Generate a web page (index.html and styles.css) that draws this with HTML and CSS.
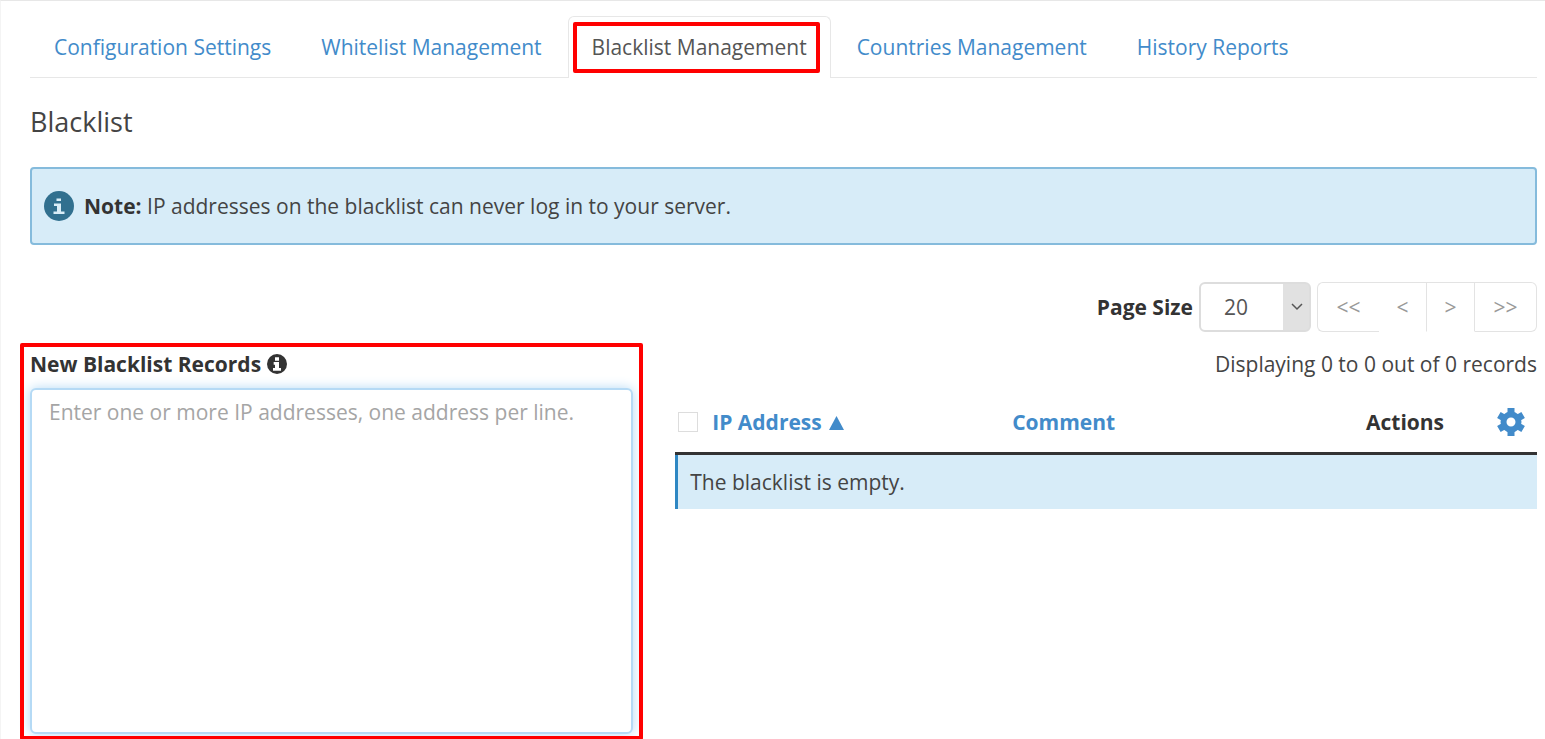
FILE: index.html
```html
<!DOCTYPE html>
<html lang="en">
<head>
    <meta charset="UTF-8">
    <meta name="viewport" content="width=device-width, initial-scale=1.0">
    <title>Blacklist Management</title>
    <link rel="stylesheet" href="styles.css">
</head>
<body>
<div class="page">

    <!-- Tabs -->
    <nav class="tabs">
        <a class="tab" href="#config">Configuration Settings</a>
        <a class="tab" href="#whitelist">Whitelist Management</a>
        <a class="tab active" href="#blacklist">Blacklist Management</a>
        <a class="tab" href="#countries">Countries Management</a>
        <a class="tab" href="#history">History Reports</a>
    </nav>

    <h2>Blacklist</h2>

    <div class="note">
        <svg class="note-icon" viewBox="0 0 30 30" aria-hidden="true">
            <circle cx="15" cy="15" r="15" fill="#31708f"/>
            <path d="M12.500 7.500h4.500v2.500h-4.500zM10 12.500h7v8h3.500v2.500H9.500v-2.500H13v-5.500h-3z" fill="#d9edf7"/>
        </svg>
        <p><strong>Note:</strong> IP addresses on the blacklist can never log in to your server.</p>
    </div>

    <!-- Page size and pager -->
    <div class="toolbar">
        <label for="pageSize">Page Size</label>
        <div class="select-box">
            <select id="pageSize">
                <option>10</option>
                <option selected>20</option>
                <option>50</option>
                <option>100</option>
            </select>
            <svg class="chevron" viewBox="0 0 12 8" aria-hidden="true">
                <path d="M1 1l5 5 5-5" fill="none" stroke="#555" stroke-width="1.5"/>
            </svg>
        </div>
        <div class="pager">
            <button type="button" disabled>&lt;&lt;</button>
            <button type="button" disabled>&lt;</button>
            <button type="button" disabled>&gt;</button>
            <button type="button" disabled>&gt;&gt;</button>
        </div>
    </div>

    <div class="columns">
        <!-- New records -->
        <form class="new-records">
            <label for="records">New Blacklist Records
                <svg class="info-icon" viewBox="0 0 30 30" aria-hidden="true">
                    <circle cx="15" cy="15" r="15" fill="#333"/>
                    <path d="M12 5h6v5h-6zM10 12h8v9h3v4H9v-4h3v-5h-2z" fill="#fff"/>
                </svg>
            </label>
            <textarea id="records" placeholder="Enter one or more IP addresses, one address per line."></textarea>
        </form>

        <!-- Current records -->
        <div class="records">
            <p class="count">Displaying 0 to 0 out of 0 records</p>
            <table>
                <thead>
                    <tr>
                        <th class="col-check"><input type="checkbox" aria-label="Select all"></th>
                        <th class="col-ip">
                            <a href="#ip">IP Address
                                <svg class="sort" viewBox="0 0 15 15" aria-hidden="true">
                                    <path d="M7.500 1L15 15H0z" fill="#428bca"/>
                                </svg>
                            </a>
                        </th>
                        <th class="col-comment"><a href="#comment">Comment</a></th>
                        <th class="col-actions">Actions</th>
                        <th class="col-gear">
                            <button type="button" class="gear" aria-label="Table settings">
                                <svg viewBox="0 0 28 28" aria-hidden="true">
                                    <g stroke="#428bca" stroke-width="7">
                                        <path d="M14 0v7M14 21v7"/>
                                        <path d="M14 0v7M14 21v7" transform="rotate(60 14 14)"/>
                                        <path d="M14 0v7M14 21v7" transform="rotate(120 14 14)"/>
                                    </g>
                                    <circle cx="14" cy="14" r="7.500" fill="none" stroke="#428bca" stroke-width="6"/>
                                </svg>
                            </button>
                        </th>
                    </tr>
                </thead>
                <tbody>
                    <tr>
                        <td colspan="5">The blacklist is empty.</td>
                    </tr>
                </tbody>
            </table>
        </div>
    </div>

</div>
</body>
</html>
```

FILE: styles.css
```css
* {
    box-sizing: border-box;
}

body {
    margin: 0;
    font-family: "Open Sans", sans-serif;
    font-size: 21px;
    line-height: 28px;
    color: #444;
    background-color: #fff;
}

.page {
    padding: 15px 8px 5px 29px;
    border-top: 1px solid #e7e7e7;
    border-left: 1px solid #f4f4f4;
}

a {
    color: #428bca;
    text-decoration: none;
}

p {
    margin: 0;
}

strong,
label,
th {
    color: #333;
    font-weight: 700;
}

/* Tabs */
.tabs {
    display: flex;
    gap: 2px;
    border-bottom: 1px solid #e7e7e7;
}

.tab {
    padding: 16px 23px 17px;
    border: 1px solid transparent;
    border-bottom: none;
    margin-bottom: -1px;
}

.tab.active {
    position: relative;
    color: #555;
    background-color: #fff;
    border-color: #e7e7e7;
    border-radius: 6px 6px 0 0;
}

/* Red callout frames */
.tab.active::after,
.new-records::after {
    content: "";
    position: absolute;
    border: 4px solid #f00;
    border-radius: 2px;
    pointer-events: none;
}

.tab.active::after {
    inset: 5px 10px 5px 4px;
}

.new-records::after {
    inset: -7px -10px -6px;
}

h2 {
    margin: 27px 0 28px;
    font-size: 27px;
    line-height: 34px;
    font-weight: 400;
}

/* Note */
.note {
    display: flex;
    align-items: center;
    gap: 10px;
    height: 78px;
    padding: 0 12px;
    background-color: #d7ecf8;
    border: 2px solid #85bbdc;
    border-radius: 4px;
}

.note-icon {
    width: 30px;
    height: 30px;
}

/* Page size and pager */
.toolbar {
    display: flex;
    justify-content: flex-end;
    align-items: center;
    gap: 6px;
    margin: 37px 0 18px;
}

.select-box {
    position: relative;
}

select {
    appearance: none;
    display: block;
    width: 112px;
    height: 50px;
    padding: 0 23px;
    font: inherit;
    color: #555;
    background: linear-gradient(#e1e1e1, #e1e1e1) right / 26px 100% no-repeat #fff;
    border: 2px solid #ddd;
    border-radius: 6px;
}

.chevron {
    position: absolute;
    top: 21px;
    right: 8px;
    width: 12px;
    height: 8px;
    pointer-events: none;
}

.pager {
    display: flex;
}

.pager button {
    width: 48px;
    height: 50px;
    padding: 0;
    font: inherit;
    color: #999;
    background-color: #fff;
    border: 1px solid #e3e3e3;
    border-left: none;
}

.pager button:first-child {
    width: 62px;
    border-left: 1px solid #e3e3e3;
    border-right: none;
    border-radius: 6px 0 0 6px;
}

.pager button:last-child {
    width: 62px;
    border-radius: 0 6px 6px 0;
}

.pager button:nth-child(2),
.pager button:nth-child(3) {
    border-bottom-color: transparent;
}

/* Columns */
.columns {
    display: grid;
    grid-template-columns: 7fr 10fr;
    gap: 42px;
    align-items: start;
}

.new-records {
    position: relative;
}

.new-records label {
    display: block;
    margin-bottom: 10px;
}

.info-icon {
    width: 20px;
    height: 20px;
    vertical-align: -2px;
}

textarea {
    display: block;
    width: 100%;
    height: 346px;
    padding: 8px 17px;
    font: inherit;
    color: #555;
    border: 2px solid #b5daf5;
    border-radius: 6px;
    outline: none;
    box-shadow: 0 0 12px #b5daf5;
    resize: none;
}

textarea::placeholder {
    color: #a5a5a5;
}

/* Records table */
.count {
    text-align: right;
}

table {
    width: 100%;
    margin-top: 14px;
    border-collapse: separate;
    border-spacing: 0;
    table-layout: fixed;
}

th {
    height: 63px;
    padding: 0;
    text-align: left;
    border-bottom: 3px solid #333;
}

.col-check {
    width: 37px;
}

.col-ip {
    width: 300px;
}

.col-actions {
    width: 120px;
}

.col-gear {
    width: 51px;
}

.sort {
    width: 15px;
    height: 15px;
    margin-left: 2px;
}

input[type="checkbox"] {
    appearance: none;
    display: block;
    width: 20px;
    height: 20px;
    margin: 0 0 0 3px;
    background-color: #fff;
    border: 1px solid #ddd;
}

.gear {
    display: block;
    padding: 0;
    margin-left: 11px;
    background: none;
    border: none;
    cursor: pointer;
}

.gear svg {
    display: block;
    width: 28px;
    height: 28px;
}

td {
    height: 54px;
    padding: 0 12px;
    background-color: #d7ecf8;
    border-left: 3px solid #2e87c3;
}
```
